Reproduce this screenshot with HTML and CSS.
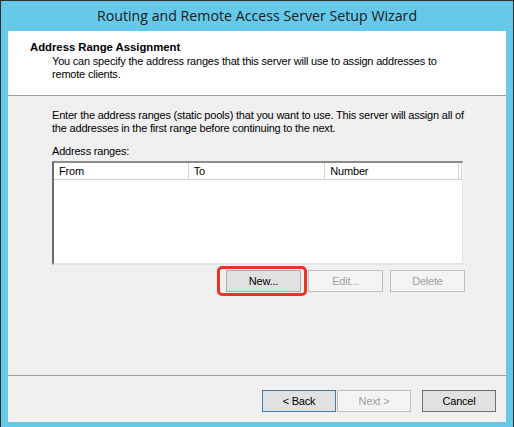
FILE: index.html
```html
<!DOCTYPE html>
<html>
<head>
<meta charset="utf-8">
<link rel="stylesheet" href="styles.css">
</head>
<body>
<div class="window">
  <div class="titlebar">Routing and Remote Access Server Setup Wizard</div>
  <div class="client">
    <div class="header">
      <div class="h-title">Address Range Assignment</div>
      <div class="h-sub">You can specify the address ranges that this server will use to assign addresses to<br>remote clients.</div>
    </div>
    <div class="body">
      <p class="intro">Enter the address ranges (static pools) that you want to use. This server will assign all of<br>the addresses in the first range before continuing to the next.</p>
      <div class="label">Address ranges:</div>
      <div class="listview">
        <div class="lv-head">
          <div class="col c1">From</div>
          <div class="col c2">To</div>
          <div class="col c3">Number</div>
          <div class="col c4"></div>
        </div>
      </div>
      <div class="lv-buttons">
        <div class="hl"><button class="btn">New...</button></div>
        <button class="btn disabled">Edit...</button>
        <button class="btn disabled">Delete</button>
      </div>
    </div>
    <div class="footer">
      <button class="btn default">&lt; Back</button>
      <button class="btn disabled next">Next &gt;</button>
      <button class="btn cancel">Cancel</button>
    </div>
  </div>
</div>
</body>
</html>
```

FILE: styles.css
```css
html, body {
  margin: 0;
  padding: 0;
}
body {
  width: 514px;
  height: 427px;
  overflow: hidden;
  font-family: "Liberation Sans", Arial, sans-serif;
  font-size: 11px;
  letter-spacing: -0.2px;
  color: #000;
}
.window {
  box-sizing: border-box;
  width: 514px;
  height: 427px;
  background: #66c9e9;
  border-left: 1px solid #2e2e2e;
  border-top: 1px solid #2e2e2e;
  border-right: 1px solid #2e2e2e;
  display: flex;
  flex-direction: column;
  padding: 0 7px 5px 7px;
}
.titlebar {
  height: 30px;
  line-height: 30px;
  text-align: center;
  font-family: "Open Sans", "Noto Sans", sans-serif;
  font-size: 14.2px;
  letter-spacing: 0;
  color: #1a1a1a;
  flex: none;
}
.client {
  flex: 1;
  background: #f0f0f0;
  display: flex;
  flex-direction: column;
}
.header {
  height: 64px;
  background: #fff;
  border-bottom: 1px solid #a0a0a0;
  padding: 0 0 0 22px;
  flex: none;
}
.h-title {
  font-weight: bold;
  font-size: 11.3px;
  letter-spacing: 0;
  margin-top: 10px;
  line-height: 13px;
}
.h-sub {
  margin-left: 22px;
  line-height: 13px;
  margin-top: 1px;
}
.body {
  flex: 1;
  padding: 0 0 0 44px;
  border-bottom: 1px solid #a0a0a0;
}
.intro {
  margin: 13px 0 0 0;
  line-height: 13px;
}
.label {
  margin-top: 10px;
  line-height: 13px;
}
.listview {
  margin-top: 3px;
  width: 411px;
  height: 104px;
  box-sizing: border-box;
  background: #fff;
  border-top: 2px solid #8c8c8c;
  border-left: 2px solid #6d6d6d;
  border-right: 1px solid #e3e3e3;
  border-bottom: 2px solid #e3e3e3;
}
.lv-head {
  display: flex;
  height: 16px;
  border-bottom: 1px solid #d0d0d0;
  background: #fff;
}
.col {
  line-height: 16px;
  padding-left: 5px;
  box-sizing: border-box;
  border-right: 1px solid #d5d5d5;
  box-shadow: 1px 0 0 #fff;
}
.c1 { width: 135px; }
.c2 { width: 137px; }
.c3 { width: 134px; }
.c4 { width: 3px; padding: 0; }
.lv-buttons {
  display: flex;
  justify-content: flex-end;
  align-items: center;
  gap: 7px;
  width: 413px;
  margin-top: 1px;
}
.lv-buttons .btn {
  width: 75px;
}
.hl {
  border: 3px solid #e3352a;
  border-radius: 5px;
  padding: 1px 3px 1px 6px;
  margin-right: -6px;
}
.btn {
  width: 74px;
  height: 22px;
  box-sizing: border-box;
  background: #e1e1e1;
  border: 1px solid #adadad;
  font-family: "Liberation Sans", Arial, sans-serif;
  font-size: 11px;
  letter-spacing: -0.2px;
  color: #000;
  padding: 0;
  margin: 0;
  display: block;
}
.btn.disabled {
  background: #f4f4f4;
  border-color: #bfbfbf;
  color: #a0a0a0;
}
.footer {
  flex: none;
  height: 46px;
  display: flex;
  align-items: flex-start;
  justify-content: flex-end;
  padding: 14px 10px 0 0;
  box-sizing: border-box;
}
.btn.default {
  border-color: #3c7fb1;
  margin-right: 1px;
}
.btn.next {
  margin-right: 11px;
}
.btn.cancel {
  border-color: #707070;
}
```
